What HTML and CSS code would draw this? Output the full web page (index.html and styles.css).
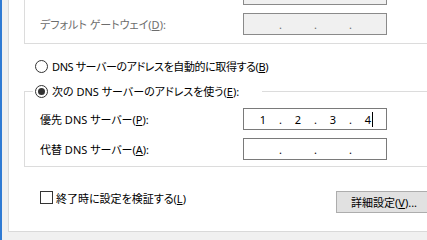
FILE: index.html
```html
<!DOCTYPE html>
<html lang="ja">
<head>
  <meta charset="UTF-8">
  <title>インターネット プロトコル バージョン 4 (TCP/IPv4) のプロパティ</title>
  <link rel="stylesheet" href="styles.css">
</head>
<body>
  <div class="accent"></div>
  <div class="sheet">
    <div class="group top-group">
      <div class="row disabled">
        <span class="label"></span>
        <div class="ip off"></div>
      </div>
      <div class="row disabled">
        <span class="label">デフォルト ゲートウェイ(<u>D</u>):</span>
        <div class="ip off"><span></span><i>.</i><span></span><i>.</i><span></span><i>.</i><span></span></div>
      </div>
    </div>

    <label class="option auto">
      <span class="radio"></span>
      <span>DNS サーバーのアドレスを自動的に取得する(<u>B</u>)</span>
    </label>

    <fieldset class="group dns">
      <legend>
        <label class="option">
          <span class="radio on"></span>
          <span>次の DNS サーバーのアドレスを使う(<u>E</u>):</span>
        </label>
      </legend>
      <div class="row">
        <span class="label">優先 DNS サーバー(<u>P</u>):</span>
        <div class="ip"><span>1</span><i>.</i><span>2</span><i>.</i><span>3</span><i>.</i><span class="caret">4</span></div>
      </div>
      <div class="row">
        <span class="label">代替 DNS サーバー(<u>A</u>):</span>
        <div class="ip"><span></span><i>.</i><span></span><i>.</i><span></span><i>.</i><span></span></div>
      </div>
    </fieldset>

    <div class="footer">
      <label class="option check">
        <span class="box"></span>
        <span>終了時に設定を検証する(<u>L</u>)</span>
      </label>
      <button class="advanced">詳細設定(<u>V</u>)...</button>
    </div>
  </div>
</body>
</html>
```

FILE: styles.css
```css
body {
  margin: 0;
  height: 240px;
  display: flex;
  overflow: hidden;
  background-color: #f0f0f0;
  font-family: "Noto Sans", "Noto Sans CJK JP", sans-serif;
  font-size: 11px;
  font-feature-settings: "palt";
  color: #000;
}
u {
  text-decoration: underline;
  text-underline-offset: 1px;
}
.accent {
  width: 2px;
  background-color: #2f7ad3;
}
.sheet {
  flex: 1;
  margin-left: 6px;
  height: 231px;
  padding-left: 15px;
  background-color: #fff;
  border-left: 1px solid #d9d9d9;
  border-bottom: 1px solid #d9d9d9;
  overflow: hidden;
}
.group {
  border: 1px solid #dcdcdc;
  margin-right: -20px;
}
.top-group {
  margin-top: -22px;
  padding: 4px 0 8px 15px;
  display: flex;
  flex-direction: column;
  gap: 8px;
}
.row {
  display: grid;
  grid-template-columns: 203px 144px;
  align-items: center;
  height: 22px;
}
.disabled .label {
  color: #6d6d6d;
}
.ip {
  box-sizing: border-box;
  height: 22px;
  border: 1px solid #7a7a7a;
  padding-left: 5px;
  display: grid;
  grid-template-columns: 28px 7px 28px 7px 28px 7px 28px;
  align-items: center;
  text-align: center;
  background-color: #fff;
}
.ip.off {
  background-color: #f0f0f0;
  border-color: #8a8a8a;
  color: #6d6d6d;
}
.ip i {
  font-style: normal;
}
.caret {
  position: relative;
}
.caret::after {
  content: "";
  position: absolute;
  left: 18px;
  top: 0;
  width: 1px;
  height: 15px;
  background-color: #000;
}
.option {
  display: flex;
  align-items: center;
  gap: 4px;
  height: 16px;
  white-space: nowrap;
}
.radio {
  box-sizing: border-box;
  width: 13px;
  height: 13px;
  border: 1px solid #333;
  border-radius: 50%;
  display: flex;
  align-items: center;
  justify-content: center;
}
.radio.on::after {
  content: "";
  width: 7px;
  height: 7px;
  border-radius: 50%;
  background-color: #333;
}
.auto {
  margin: 14px 0 0 11px;
  letter-spacing: -0.4px;
}
.dns {
  margin: 9px -20px 0 0;
  padding: 0 0 6px 15px;
  min-width: 0;
}
.dns legend {
  width: 229px;
  box-sizing: border-box;
  padding: 0 0 0 2px;
  margin-left: -7px;
}
.dns .row:first-of-type {
  margin-top: 9px;
}
.dns .row + .row {
  margin-top: 8px;
}
.footer {
  display: flex;
  align-items: flex-start;
  justify-content: space-between;
  margin: 24px -20px 0 16px;
}
.check {
  height: 13px;
  gap: 3px;
}
.box {
  box-sizing: border-box;
  width: 13px;
  height: 13px;
  border: 1px solid #333;
}
.advanced {
  width: 104px;
  height: 22px;
  margin-right: 7px;
  padding: 0 0 0 14px;
  text-align: left;
  font: inherit;
  font-feature-settings: "palt";
  background-color: #e1e1e1;
  border: 1px solid #adadad;
  color: #000;
}
```
